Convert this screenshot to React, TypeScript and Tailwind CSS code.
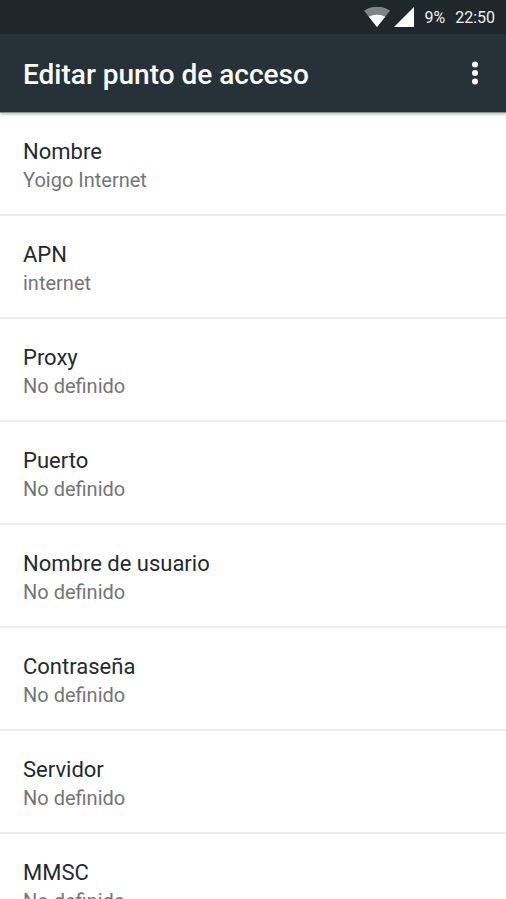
import { useState } from 'react'

const fields = [
    { id: 'name', label: 'Nombre', value: 'Yoigo Internet' },
    { id: 'apn', label: 'APN', value: 'internet' },
    { id: 'proxy', label: 'Proxy', value: '' },
    { id: 'port', label: 'Puerto', value: '' },
    { id: 'user', label: 'Nombre de usuario', value: '' },
    { id: 'password', label: 'Contraseña', value: '' },
    { id: 'server', label: 'Servidor', value: '' },
    { id: 'mmsc', label: 'MMSC', value: '' },
]

function StatusBar() {
    return (
        <div className="flex h-[34px] shrink-0 items-center justify-end bg-[#20272b] pr-[11px] text-base text-[#eceff1]">
            <svg className="h-5 w-[26px]" viewBox="0 0 26 20" aria-hidden="true">
                <path d="M0 3.8C7-1.6 19-1.6 26 3.8L13 20Z" fill="#7f8487" />
                <path d="M4.8 9.8C9.5 6.9 16.5 6.9 21.2 9.8L13 20Z" fill="#fff" />
            </svg>
            <svg className="ml-1 h-5 w-5" viewBox="0 0 20 20" aria-hidden="true">
                <path d="M20 0V20H0Z" fill="#fff" />
            </svg>
            <span className="ml-2.5 pt-0.5">9%</span>
            <span className="ml-2.5 pt-0.5">22:50</span>
        </div>
    )
}

export default function App() {
    const [selected, setSelected] = useState<string | null>(null)

    return (
        <div className="flex h-screen flex-col overflow-hidden bg-white font-['Roboto',sans-serif]">
            <StatusBar />
            <header className="z-10 flex h-[79px] shrink-0 items-center justify-between border-b border-[#8b9092] bg-[#263238] pr-[15px] pl-[23px] shadow-[0_2px_2px_rgba(0,0,0,0.2)]">
                <h1 className="pt-1 text-[28px] font-medium text-white">Editar punto de acceso</h1>
                <button type="button" aria-label="Más opciones" className="flex h-10 w-8 items-center justify-center">
                    <svg className="h-6 w-[6px]" viewBox="0 0 6 24" fill="#fff" aria-hidden="true">
                        <circle cx="3" cy="3.6" r="3" />
                        <circle cx="3" cy="12" r="3" />
                        <circle cx="3" cy="20.4" r="3" />
                    </svg>
                </button>
            </header>
            <main className="min-h-0 flex-1 overflow-hidden">
                {fields.map(field => (
                    <button key={field.id} type="button" onClick={() => setSelected(field.id)} aria-pressed={selected === field.id}
                        className="flex h-[103px] w-full flex-col justify-center border-b-2 border-[#eeeeee] px-[23px] pt-[5px] text-left">
                        <span className="text-[22px] leading-7 text-[#212b30]">{field.label}</span>
                        <span className="text-xl leading-7 text-[#757575]">{field.value || 'No definido'}</span>
                    </button>
                ))}
            </main>
        </div>
    )
}
